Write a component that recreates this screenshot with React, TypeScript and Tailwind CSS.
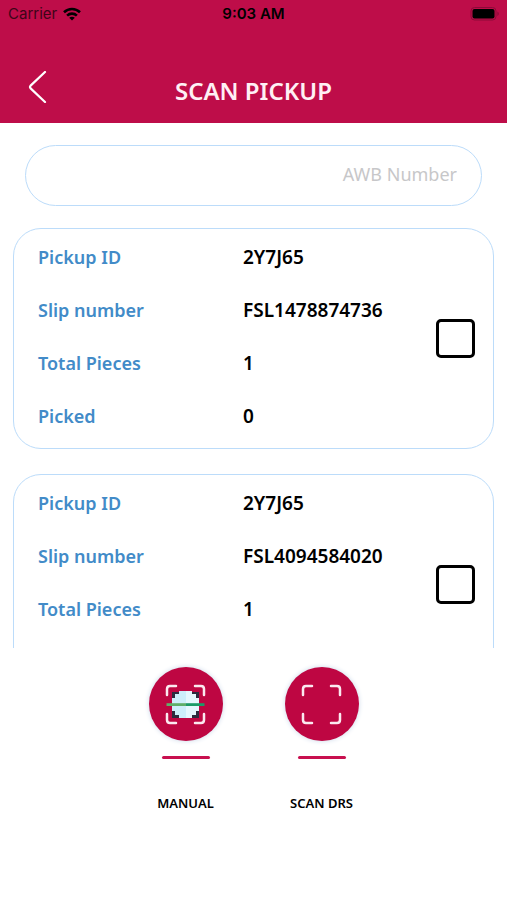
import { useState } from 'react';

interface Pickup {
  id: string;
  slip: string;
  pieces: number;
  picked: number;
}

const pickups: Pickup[] = [
  { id: '2Y7J65', slip: 'FSL1478874736', pieces: 1, picked: 0 },
  { id: '2Y7J65', slip: 'FSL4094584020', pieces: 1, picked: 0 },
];

function StatusBar() {
  return (
    <div className="grid h-7 grid-cols-3 items-center px-2 font-['Inter',sans-serif] text-[15px] leading-5 text-black">
      <div className="flex items-center gap-[6px]">
        <span className="text-[#3d0518]">Carrier</span>
        <svg width="18" height="14" viewBox="0 0 18 14" fill="none" stroke="currentColor" strokeWidth="2.6">
          <path d="M1 5.2C5.6 0.9 12.4 0.9 17 5.2" />
          <path d="M4.1 8.6C6.9 6 11.1 6 13.9 8.6" />
          <path d="M9 13.6L6.2 10.8C7.8 9.3 10.2 9.3 11.8 10.8Z" fill="currentColor" stroke="none" />
        </svg>
      </div>
      <span className="text-center font-semibold">9:03 AM</span>
      <svg className="justify-self-end" width="29" height="14" viewBox="0 0 29 14">
        <rect x="1" y="0.5" width="25" height="12.5" rx="3.5" fill="none" stroke="#8c0a39" />
        <rect x="2.5" y="2" width="22" height="9.5" rx="2" fill="#000" />
        <path d="M27.4 4.6C29.2 5.4 29.2 8.2 27.4 9Z" fill="#8c0a39" />
      </svg>
    </div>
  );
}

function PickupCard({ pickup }: { pickup: Pickup }) {
  const [checked, setChecked] = useState(false);

  const rows = [
    ['Pickup ID', pickup.id],
    ['Slip number', pickup.slip],
    ['Total Pieces', pickup.pieces],
    ['Picked', pickup.picked],
  ];

  return (
    <li className="flex items-center justify-between rounded-[28px] border border-[#bcdcfa] pr-[18px] pl-6">
      <dl className="flex flex-1 flex-col gap-[29px] pt-4 pb-5">
        {rows.map(([label, value]) => (
          <div key={label} className="flex leading-6 font-semibold">
            <dt className="w-[205px] text-lg leading-6 text-[#428bc8]">{label}</dt>
            <dd className="text-[19px] leading-6 text-black">{value}</dd>
          </div>
        ))}
      </dl>
      <input
        type="checkbox"
        aria-label={`Select ${pickup.slip}`}
        checked={checked}
        onChange={(e) => setChecked(e.target.checked)}
        className="size-[39px] appearance-none rounded-[5px] border-3 border-black checked:bg-[#be0d49]"
      />
    </li>
  );
}

function Brackets() {
  return (
    <g fill="none" stroke="#fbe9f0" strokeWidth="2.5" strokeLinecap="round" strokeLinejoin="round">
      <path d="M2 11V5Q2 2 5 2H11" />
      <path d="M30 2H36Q39 2 39 5V11" />
      <path d="M39 30V36Q39 39 36 39H30" />
      <path d="M11 39H5Q2 39 2 36V30" />
    </g>
  );
}

function ManualIcon() {
  return (
    <svg width="41" height="41" viewBox="0 0 41 41">
      <Brackets />
      <path d="M7 8H15V34H7V27H10V15H7ZM26 8H34V15H31V27H34V34H26Z" fill="#2d2b3e" />
      <path d="M14 7H21V34H14V32H10V28H7V13H10V9H14Z" fill="#cdeefb" />
      <path d="M21 7H27V9H31V13H34V28H31V32H27V34H21Z" fill="#e6f7fe" />
      <path d="M7 8H14V10H10V14H7ZM27 8H34V14H31V10H27ZM7 27H10V31H14V34H7ZM31 27H34V34H27V31H31Z" fill="#2d2b3e" />
      <path d="M1.5 19.2H21V22H1.5Z" fill="#5fae69" />
      <path d="M21 19.2H39.5V22H21Z" fill="#1c9a68" />
    </svg>
  );
}

function ScanIcon() {
  return (
    <svg width="41" height="41" viewBox="0 0 41 41">
      <Brackets />
    </svg>
  );
}

function ActionButton({ label, icon }: { label: string; icon: React.ReactNode }) {
  return (
    <button type="button" className="flex w-[136px] flex-col items-center">
      <span className="flex size-[74px] items-center justify-center rounded-full bg-[#be0642] shadow-[0_0_5px_#c9d6e8]">
        {icon}
      </span>
      <span className="mt-[15px] h-[3px] w-12 rounded-full bg-[#c8104f]" />
      <span className="mt-9 text-[13px] leading-4 font-semibold text-black">{label}</span>
    </button>
  );
}

export default function App() {
  return (
    <div className="flex h-screen flex-col bg-white font-['Noto_Sans',sans-serif]">
      <header className="bg-[#be0d49] pb-[14px]">
        <StatusBar />
        <div className="mt-[41px] grid grid-cols-[56px_1fr_56px] items-center">
          <button type="button" aria-label="Back" className="justify-self-end pr-2 pb-1">
            <svg width="20" height="32" viewBox="0 0 20 32" fill="none" stroke="#fff" strokeWidth="2.2" strokeLinecap="round" strokeLinejoin="round">
              <path d="M17 1L2.6 14.6Q1.4 16 2.6 17.4L17 31" />
            </svg>
          </button>
          <h1 className="pt-1 text-center text-2xl leading-9 font-semibold text-[#fff0f5]">SCAN PICKUP</h1>
        </div>
      </header>

      <main className="flex min-h-0 flex-1 flex-col">
        <div className="px-[25px] py-[22px]">
          <input
            type="text"
            aria-label="AWB Number"
            placeholder="AWB Number"
            className="h-[61px] w-full rounded-full border border-[#bcdcfa] px-6 pb-1 text-right text-lg outline-none placeholder:text-[#c7c7c9]"
          />
        </div>
        <ul className="flex min-h-0 flex-1 flex-col gap-[25px] overflow-y-auto px-[13px] [scrollbar-width:none]">
          {pickups.map((pickup) => (
            <PickupCard key={pickup.slip} pickup={pickup} />
          ))}
        </ul>
      </main>

      <footer className="flex justify-center pt-[19px] pb-[89px]">
        <ActionButton label="MANUAL" icon={<ManualIcon />} />
        <ActionButton label="SCAN DRS" icon={<ScanIcon />} />
      </footer>
    </div>
  );
}
